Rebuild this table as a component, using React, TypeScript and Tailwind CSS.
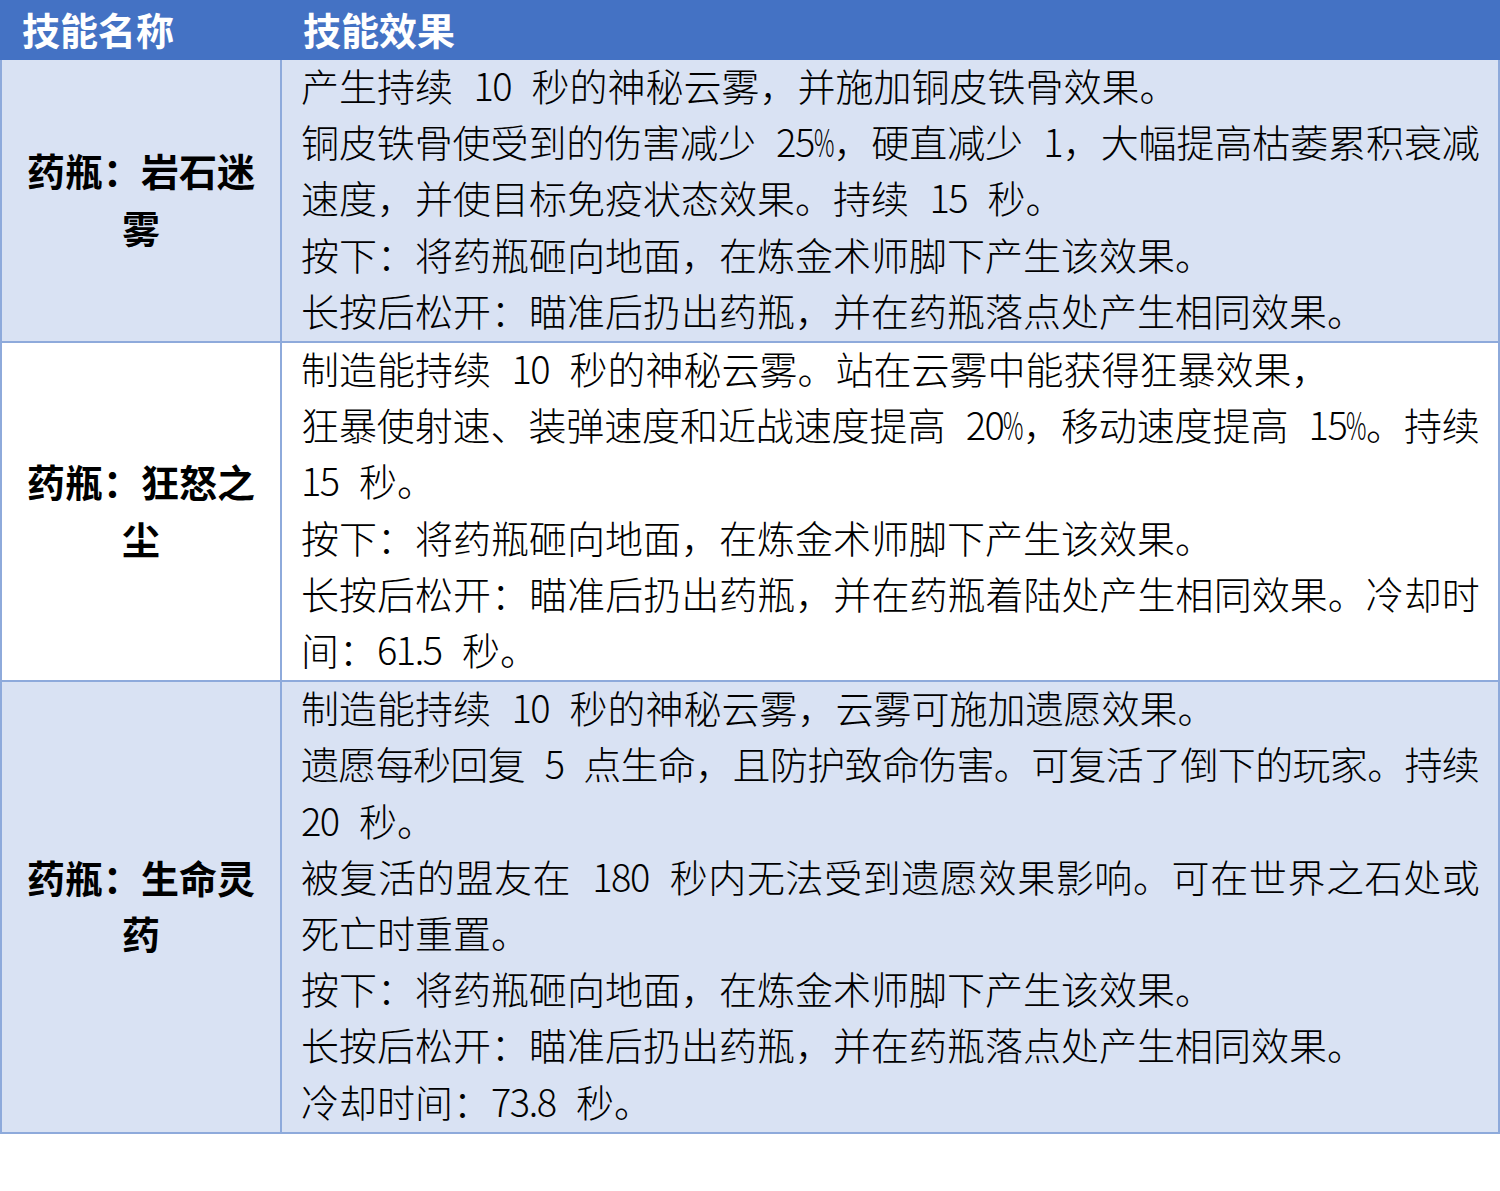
// j: line is wrapped inside its paragraph, so it is justified to the cell edge
const rows = [
  {
    name: ["药瓶：岩石迷", "雾"],
    bg: "bg-[#D9E2F3]",
    lines: [
      { t: "产生持续 10 秒的神秘云雾，并施加铜皮铁骨效果。" },
      { t: "铜皮铁骨使受到的伤害减少 25%，硬直减少 1，大幅提高枯萎累积衰减", j: true },
      { t: "速度，并使目标免疫状态效果。持续 15 秒。" },
      { t: "按下：将药瓶砸向地面，在炼金术师脚下产生该效果。" },
      { t: "长按后松开：瞄准后扔出药瓶，并在药瓶落点处产生相同效果。" },
    ],
  },
  {
    name: ["药瓶：狂怒之", "尘"],
    bg: "bg-white",
    lines: [
      { t: "制造能持续 10 秒的神秘云雾。站在云雾中能获得狂暴效果，" },
      { t: "狂暴使射速、装弹速度和近战速度提高 20%，移动速度提高 15%。持续", j: true },
      { t: "15 秒。" },
      { t: "按下：将药瓶砸向地面，在炼金术师脚下产生该效果。" },
      { t: "长按后松开：瞄准后扔出药瓶，并在药瓶着陆处产生相同效果。冷却时", j: true },
      { t: "间：61.5 秒。" },
    ],
  },
  {
    name: ["药瓶：生命灵", "药"],
    bg: "bg-[#D9E2F3]",
    lines: [
      { t: "制造能持续 10 秒的神秘云雾，云雾可施加遗愿效果。" },
      { t: "遗愿每秒回复 5 点生命，且防护致命伤害。可复活了倒下的玩家。持续", j: true },
      { t: "20 秒。" },
      { t: "被复活的盟友在 180 秒内无法受到遗愿效果影响。可在世界之石处或", j: true },
      { t: "死亡时重置。" },
      { t: "按下：将药瓶砸向地面，在炼金术师脚下产生该效果。" },
      { t: "长按后松开：瞄准后扔出药瓶，并在药瓶落点处产生相同效果。" },
      { t: "冷却时间：73.8 秒。" },
    ],
  },
];

// numbers in the source are set in a narrow latin face
function Line({ text, justify }: { text: string; justify?: boolean }) {
  const parts = text.split(/([0-9.]+%?)/);
  return (
    <div
      className={
        justify
          ? "whitespace-pre text-justify tracking-[-0.8px] [word-spacing:12px] [text-align-last:justify] [text-justify:inter-word]"
          : "whitespace-pre [word-spacing:12px]"
      }
    >
      {parts.map((p, i) => {
        if (i % 2 === 0) return <span key={i}>{p}</span>;
        const pct = p.endsWith("%");
        const num = pct ? p.slice(0, -1) : p;
        return (
          <span key={i}>
            <span className="tracking-[-1.5px]">{num}</span>
            {pct && (
              <span className="inline-block w-[19px] origin-left scale-x-[0.6]">
                %
              </span>
            )}
          </span>
        );
      })}
    </div>
  );
}

export default function App() {
  return (
    <div className="w-[1500px] min-h-[1191px] bg-white font-['Noto_Sans_CJK_SC',sans-serif] text-[38px] text-black">
      <div className="flex h-[60px] items-center bg-[#4472C4] pb-[4px] font-bold text-white">
        <div className="w-[282px] pl-[22px]">技能名称</div>
        <div className="pl-[21px]">技能效果</div>
      </div>
      {rows.map((row, i) => (
        <div
          key={i}
          className={`flex border-x-2 border-b-2 border-[#8EAADB] ${row.bg}`}
        >
          <div className="flex w-[280px] shrink-0 flex-col items-center justify-center border-r-2 border-[#8EAADB] pb-[4px] font-bold leading-[56.2px]">
            {row.name.map((n, j) => (
              <div key={j}>{n}</div>
            ))}
          </div>
          <div className="min-w-0 flex-1 pb-[3px] pl-[19px] pr-[19px]">
            <div className="-mt-[3px] font-light leading-[56.2px]">
              {row.lines.map((l, j) => (
                <Line key={j} text={l.t} justify={l.j} />
              ))}
            </div>
          </div>
        </div>
      ))}
    </div>
  );
}
